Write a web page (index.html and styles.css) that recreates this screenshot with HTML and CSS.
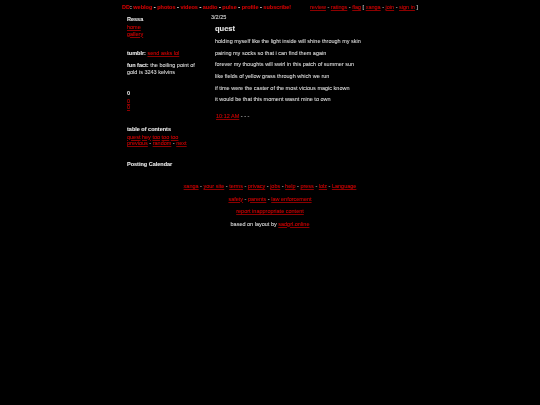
FILE: index.html
```html
<!DOCTYPE html>
<html lang="en">
<head>
  <meta charset="UTF-8">
  <title>quest</title>
  <link rel="stylesheet" href="styles.css">
</head>
<body>
  <div class="wrap">
    <div class="topbar">
      <div class="nav-left">
        <a href="#">DD</a><b>:</b> <a href="#">weblog</a> <b>-</b> <a href="#">photos</a> <b>-</b> <a href="#">videos</a> <b>-</b> <a href="#">audio</a> <b>-</b> <a href="#">pulse</a> <b>-</b> <a href="#">profile</a> <b>-</b> <a href="#">subscribe!</a>
      </div>
      <div class="nav-right">
        <a href="#">review</a> - <a href="#">ratings</a> - <a href="#">flag</a> [ <a href="#">xanga</a> - <a href="#">join</a> - <a href="#">sign in</a> ]
      </div>
    </div>

    <div class="columns">
      <div class="sidebar">
        <div class="side-name">Ressa</div>
        <div class="side-links"><a href="#">home</a><br><a href="#">gallery</a></div>
        <p class="side-line"><b>tumblr:</b> <a href="#">send asks lol</a></p>
        <p class="side-fact"><b>fun fact:</b> the boiling point of gold is 3243 kelvins</p>
        <div class="side-count">0</div>
        <div class="side-links"><a href="#">0</a><br><a href="#">0</a></div>
        <div class="side-head">table of contents</div>
        <div class="side-links"><a href="#">quest</a> <a href="#">hey</a> <a href="#">too</a> <a href="#">too</a> <a href="#">too</a><br><a href="#">previous</a> - <a href="#">random</a> - <a href="#">next</a></div>
        <div class="side-cal">Posting Calendar</div>
      </div>

      <div class="entry">
        <div class="entry-date">3/2/25</div>
        <h2 class="entry-title">quest</h2>
        <p>holding myself like the light inside will shine through my skin</p>
        <p>pairing my socks so that i can find them again</p>
        <p>forever my thoughts will swirl in this patch of summer sun</p>
        <p>like fields of yellow grass through which we run</p>
        <p>if time were the caster of the most vicious magic known</p>
        <p>it would be that this moment wasnt mine to own</p>
        <div class="entry-foot"><a href="#">10:12 AM</a> - - -</div>
      </div>
    </div>

    <div class="footer">
      <p><a href="#">xanga</a> - <a href="#">your site</a> - <a href="#">terms</a> - <a href="#">privacy</a> - <a href="#">jobs</a> - <a href="#">help</a> - <a href="#">press</a> - <a href="#">lolz</a> - <a href="#">Language</a></p>
      <p><a href="#">safety</a> - <a href="#">parents</a> - <a href="#">law enforcement</a></p>
      <p><a href="#">report inappropriate content</a></p>
      <p class="credit">based on layout by <a href="#">sadgrl.online</a></p>
    </div>
  </div>
</body>
</html>
```

FILE: styles.css
```css
html, body {
  margin: 0;
  background: #000;
}

body {
  font-family: "Liberation Sans", Arial, sans-serif;
  font-size: 5.5px;
  line-height: 6.5px;
  color: #d4d4d4;
  -webkit-text-stroke: 0.1px;
}

a {
  color: #d00000;
  text-decoration-color: #8c0000;
}

b {
  color: #e6e6e6;
}

p {
  margin: 0;
}

.wrap {
  width: 300px;
  margin: 0 auto;
  filter: blur(0.3px);
}

.topbar {
  display: flex;
  justify-content: space-between;
  padding: 4px 2px 0;
}

.nav-left {
  font-weight: bold;
}

.nav-left a {
  text-decoration: none;
}

.columns {
  display: flex;
  padding-top: 3px;
}

.sidebar {
  width: 75px;
  padding: 0 8px 0 7px;
  flex: none;
}

.side-name {
  margin-top: 2.5px;
  font-weight: bold;
  color: #e6e6e6;
}

.side-links {
  margin-top: 1.5px;
}

.side-line {
  margin-top: 12.5px;
}

.side-fact {
  margin-top: 6px;
}

.side-count {
  margin-top: 14.5px;
  font-weight: bold;
  color: #e6e6e6;
}

.side-head {
  margin-top: 15px;
  font-weight: bold;
  color: #e6e6e6;
}

.side-cal {
  margin-top: 14.5px;
  font-weight: bold;
  color: #e6e6e6;
}

.entry {
  padding-left: 1px;
}

.entry-date {
  margin-bottom: 4px;
}

.entry-title {
  margin: 0 0 5px 4px;
  font-size: 7.5px;
  line-height: 9px;
  color: #e6e6e6;
}

.entry p {
  margin: 0 0 5.2px 4px;
}

.entry-foot {
  margin: 10.5px 0 0 5px;
}

.footer {
  margin-top: 15.5px;
  text-align: center;
}

.footer p {
  margin-bottom: 6px;
}
```
